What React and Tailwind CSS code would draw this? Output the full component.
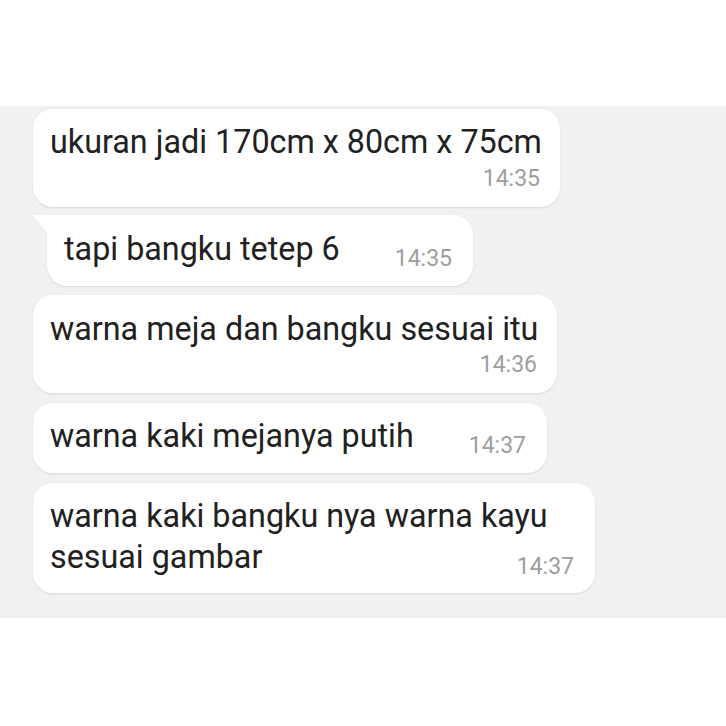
const messages = [
  { id: 1, lines: ["ukuran jadi 170cm x 80cm x 75cm"], time: "14:35", width: "w-[527px]", stacked: true, pad: "pt-[13px] pb-[14px]", gap: "mt-[3px]" },
  { id: 2, lines: ["tapi bangku tetep 6"], time: "14:35", width: "w-[426px]", tail: true, pad: "pt-[14px] pb-[13px]" },
  { id: 3, lines: ["warna meja dan bangku sesuai itu"], time: "14:36", width: "w-[524px]", stacked: true, pad: "pt-[14px] pb-[14px]", gap: "mt-[2px]" },
  { id: 4, lines: ["warna kaki mejanya putih"], time: "14:37", width: "w-[514px]", pad: "pt-[13px] pb-[13px]" },
  { id: 5, lines: ["warna kaki bangku nya warna kayu", "sesuai gambar"], time: "14:37", width: "w-[562px]", pad: "pt-[13px] pb-[12px]" },
]

const Time = ({ value, className = "" }) => (
  <span className={`block text-[23px] leading-[28px] text-[#9e9e9e] ${className}`}>{value}</span>
)

const Bubble = ({ msg }) => {
  const first = msg.lines.slice(0, -1)
  const last = msg.lines[msg.lines.length - 1]

  if (msg.stacked) {
    return (
      <div className={`${msg.width} bg-white rounded-[20px] ${msg.pad} pl-[17px] pr-[20px] shadow-[0_1px_2px_rgba(0,0,0,0.10)]`}>
        <p className="whitespace-nowrap text-[32.3px] leading-[40px] text-[#212121]">{last}</p>
        <div className={`flex justify-end ${msg.gap}`}>
          <Time value={msg.time} />
        </div>
      </div>
    )
  }

  return (
    <div className={`relative ${msg.width} ${msg.tail ? "ml-[14px] rounded-tl-none" : ""} bg-white rounded-[20px] ${msg.pad} pl-[17px] pr-[21px] shadow-[0_1px_2px_rgba(0,0,0,0.10)]`}>
      {msg.tail && (
        <svg className="absolute -left-[14px] top-0" width="14" height="18" viewBox="0 0 14 18">
          <path d="M0 0 H14 V18 Z" fill="#ffffff" />
        </svg>
      )}
      {first.map((line) => (
        <p key={line} className="whitespace-nowrap text-[32.3px] leading-[41px] text-[#212121]">{line}</p>
      ))}
      <div className="flex justify-between items-start">
        <p className={`whitespace-nowrap text-[32.3px] ${msg.lines.length > 1 ? "leading-[41px]" : "leading-[40px]"} text-[#212121]`}>{last}</p>
        <Time value={msg.time} className="mt-[16px]" />
      </div>
    </div>
  )
}

const App = () => {
  return (
    <div className="w-[726px] h-[726px] bg-white font-['Roboto',sans-serif] overflow-hidden">
      <div className="h-[106px]" />
      <div className="h-[512px] bg-[#f1f1f1] pl-[33px] pt-[3px] flex flex-col items-start">
        <Bubble msg={messages[0]} />
        <div className="mt-[8px]"><Bubble msg={messages[1]} /></div>
        <div className="mt-[9px]"><Bubble msg={messages[2]} /></div>
        <div className="mt-[10px]"><Bubble msg={messages[3]} /></div>
        <div className="mt-[10px]"><Bubble msg={messages[4]} /></div>
      </div>
    </div>
  )
}

export default App
